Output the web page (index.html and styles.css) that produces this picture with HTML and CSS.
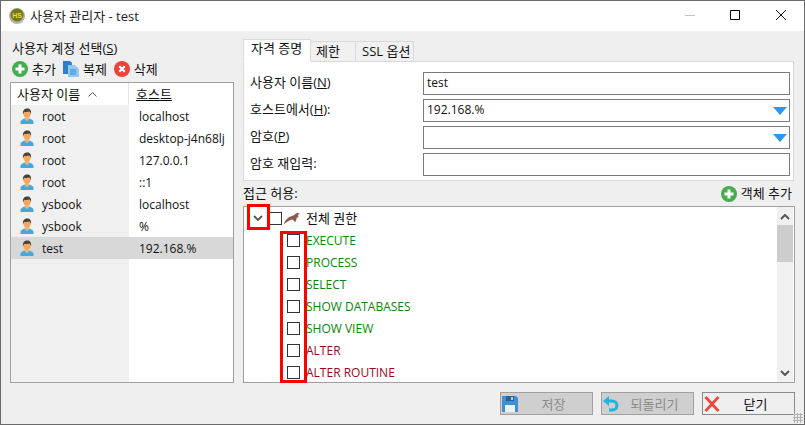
FILE: index.html
```html
<!DOCTYPE html>
<html lang="ko">
<head>
<meta charset="utf-8">
<title>사용자 관리자 - test</title>
<link rel="stylesheet" href="styles.css">
</head>
<body>
<svg class="defs" width="0" height="0">
  <symbol id="user" viewBox="0 0 16 16">
    <path d="M1.500 16v-2.200c0-1.900 2.400-2.800 4.400-3.400h4.200c2 .6 4.400 1.500 4.400 3.400V16z" fill="#3fa9e6"/>
    <path d="M6 9.500h4v2.200L8 13.200 6 11.700z" fill="#f0b070"/>
    <ellipse cx="8" cy="5.600" rx="3.700" ry="4.600" fill="#f2a860"/>
    <path d="M4 6.200C3.400 2.400 5.600.6 8.300.6c2.600 0 4.300 2 3.700 5.600-.4-1.500-1-2.400-1.800-2.700-1.500.6-3.600.5-4.700.2-.7.5-1.200 1.300-1.500 2.500z" fill="#4a4238"/>
  </symbol>
  <symbol id="plus" viewBox="0 0 16 16">
    <circle cx="8" cy="8" r="8" fill="#44ad50"/>
    <path d="M6.500 3.500h3v3h3v3h-3v3h-3v-3h-3v-3h3z" fill="#fff"/>
  </symbol>
</svg>
<div class="window">
  <header class="titlebar">
    <svg class="logo" viewBox="0 0 16 16" width="16" height="16">
      <circle cx="8" cy="8" r="8" fill="#b4b4b4"/>
      <circle cx="8" cy="7" r="6.500" fill="#6f7a12"/>
      <text x="8" y="9.500" text-anchor="middle" class="logo-text">HS</text>
    </svg>
    <span class="title">사용자 관리자 - test</span>
    <div class="win-btns">
      <svg width="46" height="30" viewBox="0 0 46 30"><path d="M19 14.500h10" stroke="#c4c4c4"/></svg>
      <svg width="46" height="30" viewBox="0 0 46 30"><path d="M18.500 9.500h9v9h-9z" fill="none" stroke="#000"/></svg>
      <svg width="46" height="30" viewBox="0 0 46 30"><path d="M18 9l10 10M28 9L18 19" stroke="#111" fill="none"/></svg>
    </div>
  </header>

  <main class="content">
    <div class="columns">
      <section class="left">
        <div class="left-label ko">사용자 계정 선택(<u>S</u>)</div>
        <div class="toolbar ko">
          <span class="tool"><svg class="ico16"><use href="#plus"/></svg>추가</span>
          <span class="tool">
            <svg class="ico16" viewBox="0 0 16 16">
              <path d="M0 0h7l2 2v11H0z" fill="#2f7fc8"/>
              <path d="M5 4h7l4 4v8H5z" fill="#8fc8f2"/>
              <path d="M7 9h6M7 11h6M7 13h6" stroke="#3c8ad0"/>
            </svg>복제</span>
          <span class="tool"><svg class="ico16" viewBox="0 0 16 16">
              <circle cx="8" cy="8" r="8" fill="#ef4136"/>
              <path d="M5.300 5.300l5.400 5.400M10.700 5.300l-5.400 5.400" stroke="#fff" stroke-width="2.200"/>
            </svg>삭제</span>
        </div>
        <div class="userlist">
          <div class="list-head ko">
            <div class="head-name">사용자 이름
              <svg class="sort" width="9" height="5" viewBox="0 0 9 5"><path d="M.5 4.500l4-4 4 4" fill="none" stroke="#555"/></svg>
            </div>
            <div class="head-host"><u>호스트</u></div>
          </div>
          <div class="row"><div class="cell-name"><svg class="ico16"><use href="#user"/></svg>root</div><div class="cell-host">localhost</div></div>
          <div class="row"><div class="cell-name"><svg class="ico16"><use href="#user"/></svg>root</div><div class="cell-host">desktop-j4n68lj</div></div>
          <div class="row"><div class="cell-name"><svg class="ico16"><use href="#user"/></svg>root</div><div class="cell-host">127.0.0.1</div></div>
          <div class="row"><div class="cell-name"><svg class="ico16"><use href="#user"/></svg>root</div><div class="cell-host">::1</div></div>
          <div class="row"><div class="cell-name"><svg class="ico16"><use href="#user"/></svg>ysbook</div><div class="cell-host">localhost</div></div>
          <div class="row"><div class="cell-name"><svg class="ico16"><use href="#user"/></svg>ysbook</div><div class="cell-host">%</div></div>
          <div class="row selected"><div class="cell-name"><svg class="ico16"><use href="#user"/></svg>test</div><div class="cell-host">192.168.%</div></div>
          <div class="row filler"><div class="cell-name"></div><div class="cell-host"></div></div>
        </div>
      </section>

      <section class="right">
        <div class="tabs ko">
          <div class="tab active">자격 증명</div>
          <div class="tab tab-limit">제한</div>
          <div class="tab tab-ssl">SSL 옵션</div>
        </div>
        <div class="tabpanel">
          <div class="field"><label class="ko">사용자 이름(<u>N</u>)</label><div class="input">test</div></div>
          <div class="field"><label class="ko">호스트에서(<u>H</u>):</label><div class="input">192.168.%<span class="arrow"></span></div></div>
          <div class="field"><label class="ko">암호(<u>P</u>)</label><div class="input"><span class="arrow"></span></div></div>
          <div class="field"><label class="ko">암호 재입력:</label><div class="input"></div></div>
        </div>
        <div class="access-head ko">
          <span class="lift">접근 허용:</span>
          <span class="add-obj"><svg class="ico16"><use href="#plus"/></svg><span class="lift">객체 추가</span></span>
        </div>
        <div class="tree">
          <div class="tree-rows">
            <div class="tree-root">
              <svg class="chev" width="10" height="6" viewBox="0 0 10 6"><path d="M1 1l4 4 4-4" fill="none" stroke="#555" stroke-width="1.800"/></svg>
              <span class="check"></span>
              <svg class="dolphin" width="16" height="12" viewBox="0 0 16 12"><path d="M0 12c1-4 4-7 8-8 2-.5 3-2 5-3l3 .5-2 1.500.5 3-1.500-1c-.5 2-1 4-2 5.500-.5-1.500-1.500-2.500-3-3-3 .5-5 2.500-8 4.500z" fill="#8a5a4a"/></svg>
              <span class="root-label ko lift">전체 권한</span>
            </div>
            <div class="tree-item green"><span class="check"></span>EXECUTE</div>
            <div class="tree-item green"><span class="check"></span>PROCESS</div>
            <div class="tree-item green"><span class="check"></span>SELECT</div>
            <div class="tree-item green"><span class="check"></span>SHOW DATABASES</div>
            <div class="tree-item green"><span class="check"></span>SHOW VIEW</div>
            <div class="tree-item red"><span class="check"></span>ALTER</div>
            <div class="tree-item red"><span class="check"></span>ALTER ROUTINE</div>
          </div>
          <div class="scrollbar">
            <svg width="10" height="6" viewBox="0 0 10 6"><path d="M1 5l4-4 4 4" fill="none" stroke="#555" stroke-width="2"/></svg>
            <div class="thumb"></div>
            <svg class="down" width="10" height="6" viewBox="0 0 10 6"><path d="M1 1l4 4 4-4" fill="none" stroke="#555" stroke-width="2"/></svg>
          </div>
        </div>
      </section>
    </div>

    <footer class="buttons ko">
      <div class="btn disabled">
        <svg class="ico16" viewBox="0 0 16 16">
          <path d="M0 0h14l2 2v14H0z" fill="#3f8fd6"/><path d="M3 9h10v7H3z" fill="#e8f2fa"/><path d="M4 0h8v5H4z" fill="#2a6098"/><path d="M9 1h2v3H9z" fill="#bcd"/>
        </svg><span>저장</span></div>
      <div class="btn disabled">
        <svg class="ico16" viewBox="0 0 16 16">
          <path d="M0 5l6-5v10z" fill="#1fb5dc"/>
          <path d="M5 5h4c3 0 5 2 5 4.500S12 14 9 14H6" fill="none" stroke="#1fb5dc" stroke-width="3"/>
        </svg><span>되돌리기</span></div>
      <div class="btn close-btn">
        <svg class="ico16" viewBox="0 0 16 16"><path d="M1.500 1l13 14M14.500 1l-13 14" stroke="#f0453a" stroke-width="2.600"/></svg><span>닫기</span></div>
    </footer>
    <div class="grip"></div>

    <div class="mark mark-chev"></div>
    <div class="mark mark-checks"></div>
  </main>
</div>
</body>
</html>
```

FILE: styles.css
```css
* { box-sizing: border-box; }
html, body { margin: 0; padding: 0; }
body {
  width: 805px;
  height: 425px;
  overflow: hidden;
  font-family: "Open Sans", "Noto Sans CJK KR", sans-serif;
  font-size: 12px;
  color: #111;
}
.ko { font-size: 13px; }
.lift { position: relative; top: -1px; }
.defs { position: absolute; }
.window {
  width: 805px;
  height: 425px;
  border: 1px solid #6a6a6a;
  background: #efefef;
  display: flex;
  flex-direction: column;
}
.titlebar {
  height: 30px;
  background: #fff;
  display: flex;
  align-items: center;
  padding-left: 8px;
  flex: none;
}
.logo { flex: none; }
.logo-text { font-size: 7px; font-weight: 700; fill: #f6d54a; font-family: "Liberation Sans", sans-serif; }
.title { margin-left: 5px; font-size: 13px; color: #222; position: relative; top: -1px; }
.win-btns { margin-left: auto; display: flex; }
.win-btns svg { display: block; }

.content { position: relative; flex: 1; padding: 8px 9px 0 9px; display: flex; flex-direction: column; }
.columns { display: flex; gap: 9px; height: 344px; flex: none; }

.left { width: 224px; flex: none; display: flex; flex-direction: column; }
.left-label { height: 20px; line-height: 18px; padding-left: 2px; }
.toolbar { display: flex; height: 20px; padding-left: 2px; margin-bottom: 3px; align-items: center; gap: 7px; line-height: 18px; }
.tool { display: flex; align-items: center; gap: 4px; }
.ico16 { width: 16px; height: 16px; flex: none; display: block; }

.userlist { height: 301px; border: 1px solid #a0a0a0; background: #fff; display: flex; flex-direction: column; overflow: hidden; }
.list-head { display: flex; height: 22px; flex: none; align-items: center; line-height: 18px; }
.head-name { width: 118px; height: 100%; padding-left: 6px; display: flex; align-items: center; gap: 8px; border-right: 1px solid #e4e4e4; }
.head-host { flex: 1; padding-left: 7px; }
.row { display: flex; height: 22px; flex: none; align-items: center; }
.cell-name { width: 118px; height: 100%; background: #f0f0f0; display: flex; align-items: center; gap: 7px; padding-left: 8px; }
.cell-host { flex: 1; padding-left: 10px; }
.row.selected { background: #d8d8d8; }
.row.selected .cell-name { background: transparent; }
.row.filler { flex: 1; }

.right { flex: 1; min-width: 0; display: flex; flex-direction: column; }
.tabs { display: flex; height: 23px; align-items: flex-end; position: relative; z-index: 1; }
.tab { height: 21px; line-height: 18px; border: 1px solid #d9d9d9; background: #f0f0f0; padding-left: 5px; margin-left: -1px; }
.tab:first-child { margin-left: 0; }
.tab.active { width: 68px; height: 23px; background: #fff; border-bottom-color: #fff; padding-left: 7px; line-height: 17px; }
.tab-limit { width: 46px; }
.tab-ssl { width: 59px; padding-left: 6px; }
.tabpanel { height: 120px; width: 551px; margin-top: -1px; background: #fff; border: 1px solid #d9d9d9; padding: 10px 3px 0 6px; display: flex; flex-direction: column; gap: 4px; }
.field { display: flex; height: 23px; align-items: center; }
.field label { width: 173px; flex: none; line-height: 19px; position: relative; top: -1px; }
.input { flex: 1; height: 23px; border: 1px solid #7a7a7a; background: #fff; line-height: 20px; padding-left: 3px; position: relative; }
.arrow { position: absolute; right: 2px; top: 7px; width: 0; height: 0; border-left: 7px solid transparent; border-right: 7px solid transparent; border-top: 8px solid #2b97f0; }

.access-head { height: 25px; display: flex; justify-content: space-between; align-items: center; padding-right: 3px; flex: none; }
.add-obj { display: flex; align-items: center; gap: 4px; }

.tree { flex: 1; min-height: 0; border: 1px solid #a0a0a0; background: #fff; display: flex; overflow: hidden; }
.tree-rows { flex: 1; min-width: 0; display: flex; flex-direction: column; }
.tree-root { height: 22px; flex: none; display: flex; align-items: center; padding-left: 9px; }
.chev { flex: none; }
.check { display: block; width: 13px; height: 13px; border: 1px solid #333; background: #fff; flex: none; }
.tree-root .check { margin-left: 6px; }
.dolphin { margin-left: 2px; flex: none; }
.root-label { margin-left: 6px; }
.tree-item { height: 22px; flex: none; display: flex; align-items: center; padding-left: 43px; gap: 6px; }
.green { color: #0a860a; }
.red { color: #960a1e; }
.scrollbar { width: 16px; flex: none; background: #f0f0f0; margin-right: 1px; display: flex; flex-direction: column; align-items: center; padding-top: 7px; padding-bottom: 6px; }
.thumb { width: 16px; height: 37px; background: #cdcdcd; margin-top: 5px; }
.down { margin-top: auto; }

.buttons { display: flex; justify-content: flex-end; gap: 8px; margin-top: 9px; line-height: 18px; }
.btn { width: 93px; height: 23px; border: 1px solid #a0a0a0; background: #cfcfcf; display: flex; align-items: center; padding-left: 1px; }
.btn span { flex: 1; text-align: center; padding-right: 3px; }
.btn.disabled { color: #8a8a8a; }
.btn.close-btn { background: #efefef; border-color: #8a8a8a; }
.grip {
  position: absolute; right: 1px; bottom: 1px; width: 10px; height: 10px;
  background-image: radial-gradient(circle, #b0b0b0 1px, transparent 1.200px);
  background-size: 3px 3px;
}
.mark { position: absolute; border: 3px solid #f00; pointer-events: none; }
.mark-chev { left: 246px; top: 173px; width: 23px; height: 26px; }
.mark-checks { left: 279px; top: 200px; width: 27px; height: 152px; }
```
